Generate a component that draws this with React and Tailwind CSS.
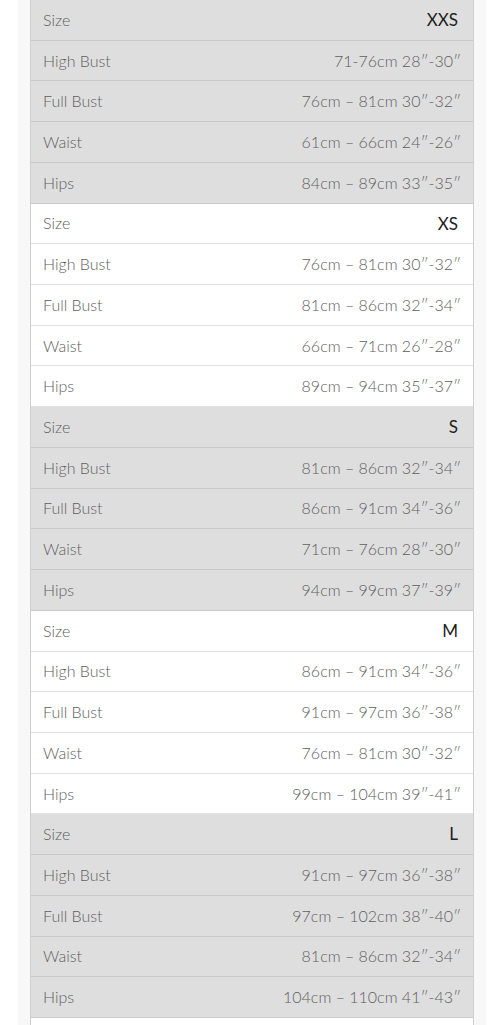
import React from "react";

const groups = [
  { size: "XXS", gray: true, rows: ["71-76cm 28″-30″", "76cm – 81cm 30″-32″", "61cm – 66cm 24″-26″", "84cm – 89cm 33″-35″"] },
  { size: "XS", gray: false, rows: ["76cm – 81cm 30″-32″", "81cm – 86cm 32″-34″", "66cm – 71cm 26″-28″", "89cm – 94cm 35″-37″"] },
  { size: "S", gray: true, rows: ["81cm – 86cm 32″-34″", "86cm – 91cm 34″-36″", "71cm – 76cm 28″-30″", "94cm – 99cm 37″-39″"] },
  { size: "M", gray: false, rows: ["86cm – 91cm 34″-36″", "91cm – 97cm 36″-38″", "76cm – 81cm 30″-32″", "99cm – 104cm 39″-41″"] },
  { size: "L", gray: true, rows: ["91cm – 97cm 36″-38″", "97cm – 102cm 38″-40″", "81cm – 86cm 32″-34″", "104cm – 110cm 41″-43″"] },
];
const labels = ["High Bust", "Full Bust", "Waist", "Hips"];

function Row({ label, value, gray, isSize }) {
  return (
    <div
      className={
        "flex h-[40.72px] items-center justify-between border-b px-[12px] " +
        (gray ? "bg-[#dedede] border-[#c9c9c9]" : "bg-white border-[#e2e2e2]")
      }
    >
      <span className="text-[#5e5e5e]">{label}</span>
      <span className={isSize ? "pr-[3px] text-[17px] font-normal text-[#1e1e1e]" : "text-[#5e5e5e]"}>{value}</span>
    </div>
  );
}

export default function App() {
  return (
    <div className="h-[1025px] overflow-hidden bg-white">
      <div className="ml-[18px] w-[468px] bg-[#f8f8f8] px-[12px]">
        <div
          className="border-x border-[#cfcfcf] text-[16px] font-light"
          style={{ fontFamily: "Lato, 'Liberation Sans', sans-serif" }}
        >
          {groups.map((g) => (
            <div key={g.size}>
              <Row label="Size" value={g.size} gray={g.gray} isSize />
              {g.rows.map((v, i) => (
                <Row key={i} label={labels[i]} value={v} gray={g.gray} />
              ))}
            </div>
          ))}
          <div className="h-[40px] bg-white" />
        </div>
      </div>
    </div>
  );
}
